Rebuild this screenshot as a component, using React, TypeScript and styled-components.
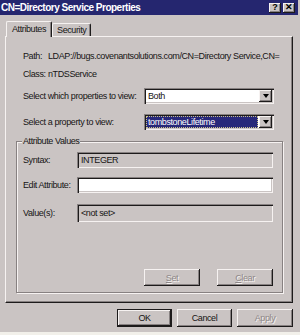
import styled, { createGlobalStyle } from "styled-components";

const FONT = `"Liberation Sans", Arial, sans-serif`;

const Colors = {
  face: "#cac4c3",
  title: "#25266f",
  shadow: "#878181",
  dark: "#1d1b1b",
  light: "#f6f2f1",
  text: "#161414",
  disabled: "#8d8787",
  select: "#27287a",
};

const GlobalStyle = createGlobalStyle`
  html, body {
    margin: 0;
    padding: 0;
  }
  body {
    background: ${Colors.face};
    font-family: ${FONT};
    font-size: 9px;
    letter-spacing: -0.4px;
    color: ${Colors.text};
  }
  * {
    box-sizing: border-box;
  }
`;

const Dialog = styled.div`
  width: 300px;
  height: 335px;
  display: flex;
  flex-direction: column;
  background: ${Colors.face};
  overflow: hidden;
`;

const TitleBar = styled.div`
  width: 298px;
  height: 15px;
  flex-shrink: 0;
  display: flex;
  align-items: center;
  justify-content: space-between;
  padding: 0 3px 0 1px;
  background: ${Colors.title};
`;

const Title = styled.span`
  color: #ffffff;
  font-weight: bold;
  font-size: 10px;
  letter-spacing: -0.5px;
  line-height: 12px;
`;

const CaptionButtons = styled.div`
  display: flex;
  gap: 2px;
`;

const CaptionButton = styled.div`
  width: 12px;
  height: 10px;
  display: flex;
  align-items: center;
  justify-content: center;
  background: ${Colors.face};
  box-shadow: inset -1px -1px 0 ${Colors.dark}, inset 1px 1px 0 ${Colors.light},
    inset -2px -2px 0 ${Colors.shadow};
  color: #000;
  font-weight: bold;
  font-size: 9px;
  letter-spacing: 0;
  line-height: 1;
`;

const Body = styled.div`
  flex: 1;
  display: flex;
  flex-direction: column;
  padding: 6px 7px 0 5px;
`;

const TabRow = styled.div`
  height: 15px;
  display: flex;
  align-items: flex-end;
  padding-left: 1px;
  position: relative;
  z-index: 1;
`;

const Tab = styled.div<{ $active?: boolean }>`
  height: ${(p) => (p.$active ? 16 : 13)}px;
  margin-bottom: ${(p) => (p.$active ? -1 : 0)}px;
  padding: ${(p) => (p.$active ? "1px 5px 0 5px" : "0 4px 0 4px")};
  display: flex;
  align-items: ${(p) => (p.$active ? "flex-start" : "center")};
  background: ${Colors.face};
  border-top: 1px solid ${Colors.light};
  border-left: 1px solid ${Colors.light};
  border-right: 1px solid ${Colors.dark};
  border-top-left-radius: 2px;
  border-top-right-radius: 2px;
  box-shadow: inset -1px 0 0 ${Colors.shadow};
  line-height: 12px;
`;

const Panel = styled.div`
  width: 288px;
  height: 267px;
  display: flex;
  flex-direction: column;
  padding: 13px 0 0 10px;
  border-top: 1px solid ${Colors.light};
  border-left: 1px solid ${Colors.light};
  border-right: 1px solid ${Colors.dark};
  border-bottom: 1px solid ${Colors.dark};
  box-shadow: inset -1px -1px 0 ${Colors.shadow};
`;

const InfoRow = styled.div<{ $top?: number }>`
  height: 12px;
  margin: ${(p) => p.$top ?? 0}px 0 0 7px;
  display: flex;
  align-items: center;
  line-height: 12px;
  white-space: nowrap;
  width: 262px;
`;

const InfoLabel = styled.span`
  width: 25px;
  flex-shrink: 0;
`;

const SelectRow = styled.div<{ $top?: number }>`
  height: 16px;
  margin: ${(p) => p.$top ?? 0}px 0 0 7px;
  display: flex;
  align-items: center;
`;

const SelectLabel = styled.span`
  width: 121px;
  flex-shrink: 0;
  white-space: nowrap;
`;

const sunken = `
  box-shadow: inset 1px 1px 0 ${Colors.shadow}, inset 2px 2px 0 ${Colors.dark},
    inset -1px -1px 0 ${Colors.light}, inset -2px -2px 0 ${Colors.face};
`;

const SelectBox = styled.div`
  width: 130px;
  height: 16px;
  display: flex;
  padding: 2px;
  background: #ffffff;
  ${sunken}
`;

const SelectValue = styled.div<{ $highlight?: boolean }>`
  flex: 1;
  display: flex;
  align-items: center;
  padding-left: 2px;
  margin-right: 1px;
  line-height: 12px;
  color: ${(p) => (p.$highlight ? "#ffffff" : Colors.text)};
  background: ${(p) => (p.$highlight ? Colors.select : "transparent")};
  outline: ${(p) => (p.$highlight ? `1px dotted #c9c08a` : "none")};
  outline-offset: -1px;
`;

const ArrowButton = styled.div`
  width: 13px;
  display: flex;
  align-items: center;
  justify-content: center;
  background: ${Colors.face};
  box-shadow: inset -1px -1px 0 ${Colors.dark}, inset 1px 1px 0 ${Colors.light},
    inset -2px -2px 0 ${Colors.shadow};
`;

const Arrow = styled.div`
  width: 0;
  height: 0;
  border-left: 3.5px solid transparent;
  border-right: 3.5px solid transparent;
  border-top: 4px solid #000000;
`;

const Group = styled.fieldset`
  width: 267px;
  height: 158px;
  margin: 5px 0 0 0;
  padding: 5px 9px 0 6px;
  display: flex;
  flex-direction: column;
  border: 1px solid ${Colors.shadow};
  box-shadow: 1px 1px 0 ${Colors.light}, inset 1px 1px 0 ${Colors.light};
`;

const Legend = styled.legend`
  padding: 0 1px;
  margin-left: -1px;
  line-height: 12px;
  background: ${Colors.face};
`;

const FieldRow = styled.div<{ $top?: number; $height?: number }>`
  display: grid;
  grid-template-columns: 54px 196px;
  align-items: center;
  white-space: nowrap;
  height: ${(p) => p.$height ?? 16}px;
  margin-top: ${(p) => p.$top ?? 0}px;
`;

const Field = styled.div<{ $readOnly?: boolean }>`
  height: 100%;
  display: flex;
  align-items: center;
  padding-left: 4px;
  line-height: 12px;
  background: ${(p) => (p.$readOnly ? Colors.face : "#ffffff")};
  ${sunken}
`;

const ButtonRow = styled.div<{ $top: number; $gap: number }>`
  display: flex;
  justify-content: flex-end;
  gap: ${(p) => p.$gap}px;
  margin-top: ${(p) => p.$top}px;
`;

const Button = styled.div<{ $disabled?: boolean; $default?: boolean; $width?: number; $height?: number }>`
  width: ${(p) => p.$width ?? 56}px;
  height: ${(p) => p.$height ?? 18}px;
  display: flex;
  align-items: center;
  justify-content: center;
  line-height: 12px;
  background: ${Colors.face};
  color: ${(p) => (p.$disabled ? Colors.disabled : Colors.text)};
  text-shadow: ${(p) => (p.$disabled ? `1px 1px 0 ${Colors.light}` : "none")};
  border: ${(p) => (p.$default ? `1px solid ${Colors.dark}` : "none")};
  box-shadow: inset -1px -1px 0 ${Colors.dark}, inset 1px 1px 0 ${Colors.light},
    inset -2px -2px 0 ${Colors.shadow};
`;

const Strip = styled.div`
  height: 3px;
  flex-shrink: 0;
  background: #f2f0ea;
`;

const App = () => {
  return (
    <>
      <GlobalStyle />
      <Dialog>
        <TitleBar>
          <Title>CN=Directory Service Properties</Title>
          <CaptionButtons>
            <CaptionButton>?</CaptionButton>
            <CaptionButton>✕</CaptionButton>
          </CaptionButtons>
        </TitleBar>
        <Body>
          <TabRow>
            <Tab $active>Attributes</Tab>
            <Tab>Security</Tab>
          </TabRow>
          <Panel>
            <InfoRow>
              <InfoLabel>Path:</InfoLabel>
              LDAP://bugs.covenantsolutions.com/CN=Directory Service,CN=
            </InfoRow>
            <InfoRow $top={6}>
              <InfoLabel>Class:</InfoLabel>
              nTDSService
            </InfoRow>
            <SelectRow $top={8}>
              <SelectLabel>Select which properties to view:</SelectLabel>
              <SelectBox>
                <SelectValue>Both</SelectValue>
                <ArrowButton>
                  <Arrow />
                </ArrowButton>
              </SelectBox>
            </SelectRow>
            <SelectRow $top={10}>
              <SelectLabel>Select a property to view:</SelectLabel>
              <SelectBox>
                <SelectValue $highlight>tombstoneLifetime</SelectValue>
                <ArrowButton>
                  <Arrow />
                </ArrowButton>
              </SelectBox>
            </SelectRow>
            <Group>
              <Legend>Attribute Values</Legend>
              <FieldRow>
                <span>Syntax:</span>
                <Field $readOnly>INTEGER</Field>
              </FieldRow>
              <FieldRow $top={9}>
                <span>Edit Attribute:</span>
                <Field />
              </FieldRow>
              <FieldRow $top={11} $height={18}>
                <span>Value(s):</span>
                <Field $readOnly>&lt;not set&gt;</Field>
              </FieldRow>
              <ButtonRow $top={47} $gap={17}>
                <Button $disabled $height={17}>
                  <u>S</u>et
                </Button>
                <Button $disabled $height={17}>
                  <u>C</u>lear
                </Button>
              </ButtonRow>
            </Group>
          </Panel>
          <ButtonRow $top={6} $gap={5}>
            <Button $default $width={55}>OK</Button>
            <Button $width={55}>Cancel</Button>
            <Button $disabled $width={56}>Apply</Button>
          </ButtonRow>
        </Body>
        <Strip />
      </Dialog>
    </>
  );
};

export default App;
